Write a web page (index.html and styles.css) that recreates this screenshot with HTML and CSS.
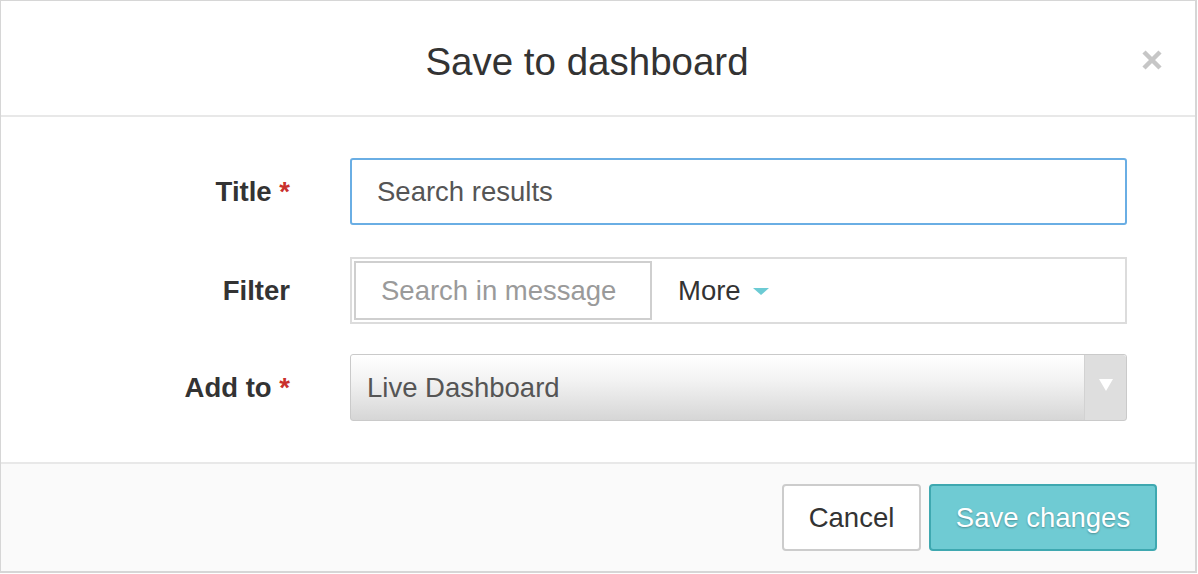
FILE: index.html
```html
<!DOCTYPE html>
<html>
<head>
<meta charset="utf-8">
<link rel="stylesheet" href="styles.css">
</head>
<body>
<div class="modal">
  <div class="modal-header">
    <h1 class="modal-title">Save to dashboard</h1>
    <button class="close" aria-label="Close">
      <svg width="22" height="22" viewBox="0 0 22 22"><path d="M3 3 L19 19 M19 3 L3 19" stroke="#c6c6c6" stroke-width="4.5" stroke-linecap="butt"/></svg>
    </button>
  </div>
  <div class="modal-body">
    <div class="row">
      <label class="label">Title <span class="req">*</span></label>
      <div class="input focus">Search results</div>
    </div>
    <div class="row">
      <label class="label">Filter</label>
      <div class="filter">
        <div class="filter-input">Search in message</div>
        <div class="more">More <span class="caret"></span></div>
      </div>
    </div>
    <div class="row row-last">
      <label class="label">Add to <span class="req">*</span></label>
      <div class="select">
        <span class="select-text">Live Dashboard</span>
        <span class="select-arrow"><span class="tri"></span></span>
      </div>
    </div>
  </div>
  <div class="modal-footer">
    <button class="btn btn-default">Cancel</button>
    <button class="btn btn-primary">Save changes</button>
  </div>
</div>
</body>
</html>
```
FILE: styles.css
```css
* { box-sizing: border-box; }
html, body { margin: 0; padding: 0; background: #fff; }
body { font-family: "Liberation Sans", Arial, Helvetica, sans-serif; color: #333; }

.modal {
  width: 1197px;
  height: 573px;
  border: 1px solid #d6d6d6;
  border-right-width: 2px;
  border-bottom-width: 2px;
  display: flex;
  flex-direction: column;
  background: #fff;
}

.modal-header {
  height: 116px;
  border-bottom: 2px solid #e8e8e8;
  display: flex;
  align-items: center;
  justify-content: center;
  position: relative;
  flex: none;
}
.modal-title {
  margin: 0;
  margin-top: 8px;
  margin-left: -22px;
  font-size: 38.5px;
  font-weight: normal;
  color: #333;
}
.close {
  position: absolute;
  right: 32px;
  top: 48px;
  border: 0;
  background: none;
  padding: 0;
  width: 22px;
  height: 22px;
  display: flex;
}

.modal-body {
  flex: 1;
  padding-top: 41px;
  display: flex;
  flex-direction: column;
  gap: 32px;
}
.row {
  display: grid;
  grid-template-columns: 289px 777px;
  column-gap: 60px;
  align-items: center;
  height: 67px;
  flex: none;
}
.row-last { margin-top: -2px; }
.label {
  text-align: right;
  font-weight: bold;
  font-size: 27.5px;
  color: #333;
}
.req { color: #c9302c; }

.input {
  height: 67px;
  border: 2px solid #6aaee4;
  border-radius: 3px;
  padding-left: 25px;
  display: flex;
  align-items: center;
  font-size: 27.5px;
  color: #555;
}

.filter {
  height: 67px;
  border: 2px solid #dcdcdc;
  padding: 2px;
  display: flex;
  align-items: stretch;
}
.filter-input {
  width: 298px;
  border: 2px solid #cfcfcf;
  display: flex;
  align-items: center;
  padding-left: 25px;
  font-size: 27.5px;
  color: #9a9a9a;
}
.more {
  display: flex;
  align-items: center;
  padding-left: 26px;
  font-size: 27.5px;
  color: #333;
}
.caret {
  display: inline-block;
  width: 0;
  height: 0;
  margin-left: 12px;
  margin-top: 2px;
  border-left: 8px solid transparent;
  border-right: 8px solid transparent;
  border-top: 7px solid #6ccbd4;
}

.select {
  height: 67px;
  border: 1px solid #cacaca;
  border-radius: 3px;
  background: linear-gradient(#ffffff 0%, #f2f2f2 40%, #d6d6d6 100%);
  display: flex;
  align-items: stretch;
}
.select-text {
  flex: 1;
  display: flex;
  align-items: center;
  padding-left: 16px;
  font-size: 27.5px;
  color: #555;
}
.select-arrow {
  width: 42px;
  border-left: 1px solid #d2d2d2;
  background: #dedede;
  display: flex;
  align-items: center;
  justify-content: center;
  border-radius: 0 3px 3px 0;
}
.tri {
  width: 0;
  height: 0;
  border-left: 7px solid transparent;
  border-right: 7px solid transparent;
  border-top: 12px solid #fff;
  margin-bottom: 6px;
}

.modal-footer {
  flex: none;
  height: 109px;
  border-top: 2px solid #e8e8e8;
  background: #fafafa;
  display: flex;
  justify-content: flex-end;
  align-items: flex-start;
  padding-top: 20px;
  padding-right: 38px;
  gap: 8px;
}
.btn {
  height: 67px;
  font-family: "Liberation Sans", Arial, Helvetica, sans-serif;
  font-size: 27.5px;
  border-radius: 4px;
  border: 2px solid #cccccc;
  padding: 0;
  cursor: pointer;
}
.btn-default {
  background: #fff;
  color: #333;
  width: 139px;
}
.btn-primary {
  background: #6fcbd3;
  border-color: #3ea8b0;
  color: #fff;
  width: 228px;
  text-shadow: 0 1px 2px rgba(0,0,0,0.3);
}
```
